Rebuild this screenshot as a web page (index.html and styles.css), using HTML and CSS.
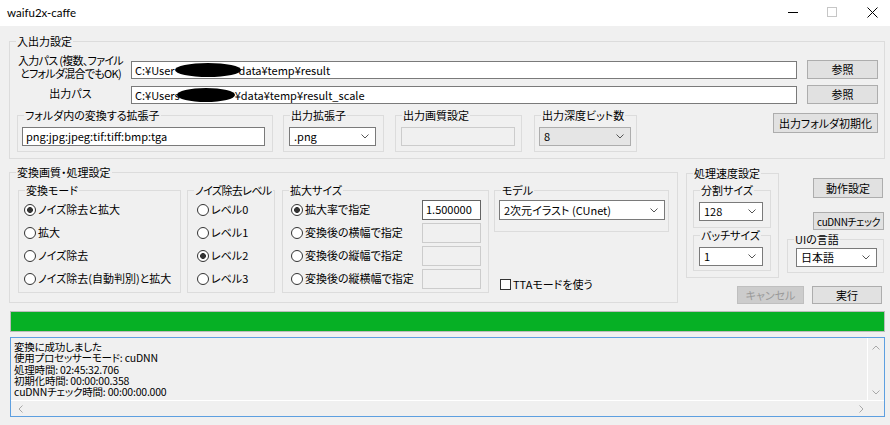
FILE: index.html
```html
<!DOCTYPE html>
<html lang="ja">
<head>
  <meta charset="UTF-8" />
  <title>waifu2x-caffe</title>
  <link rel="stylesheet" href="styles.css">
</head>
<body>
  <div class="titlebar">
    <span class="title">waifu2x-caffe</span>
    <div class="controls">
      <svg class="ctl-min" width="10" height="1"><rect width="10" height="1" fill="#000"/></svg>
      <svg class="ctl-max" width="10" height="10"><rect x="0.5" y="0.5" width="9" height="9" fill="none" stroke="#c6c6c6"/></svg>
      <svg class="ctl-close" width="11" height="11"><path d="M0.5 0.5L10.5 10.5M10.5 0.5L0.5 10.5" stroke="#000" stroke-width="1"/></svg>
    </div>
  </div>

  <div class="client">
    <fieldset class="group io">
      <legend>入出力設定</legend>
      <div class="path-row first">
        <label class="path-label">入力パス&nbsp;(複数、ファイル<br>とフォルダ混合でもOK)</label>
        <div class="textbox path-box">C:¥User<span class="blot blot-a"></span>data¥temp¥result</div>
        <button class="btn ref-btn">参照</button>
      </div>
      <div class="path-row second">
        <label class="path-label">出力パス</label>
        <div class="textbox path-box">C:¥Users<span class="blot blot-b"></span>¥data¥temp¥result_scale</div>
        <button class="btn ref-btn">参照</button>
      </div>

      <div class="io-row">
        <fieldset class="group sub sub-ext">
          <legend>フォルダ内の変換する拡張子</legend>
          <div class="textbox field ext-box">png:jpg:jpeg:tif:tiff:bmp:tga</div>
        </fieldset>
        <fieldset class="group sub sub-outext">
          <legend>出力拡張子</legend>
          <div class="combo field outext-box"><span>.png</span><svg class="chev" width="8" height="5"><path d="M0.5 0.5L4 4L7.5 0.5" fill="none" stroke="#555"/></svg></div>
        </fieldset>
        <fieldset class="group sub sub-quality">
          <legend>出力画質設定</legend>
          <div class="textbox disabled field quality-box"></div>
        </fieldset>
        <fieldset class="group sub sub-depth">
          <legend>出力深度ビット数</legend>
          <div class="combo list field depth-box"><span>8</span><svg class="chev" width="8" height="5"><path d="M0.5 0.5L4 4L7.5 0.5" fill="none" stroke="#555"/></svg></div>
        </fieldset>
        <button class="btn init-btn">出力フォルダ初期化</button>
      </div>
    </fieldset>

    <div class="mid">
      <fieldset class="group conv">
        <legend>変換画質・処理設定</legend>
        <div class="conv-row">
          <fieldset class="group sub2 mode">
            <legend>変換モード</legend>
            <div class="radios">
              <div class="radio-row"><span class="radio on"></span>ノイズ除去と拡大</div>
              <div class="radio-row"><span class="radio"></span>拡大</div>
              <div class="radio-row"><span class="radio"></span>ノイズ除去</div>
              <div class="radio-row"><span class="radio"></span>ノイズ除去(自動判別)と拡大</div>
            </div>
          </fieldset>
          <fieldset class="group sub2 noise">
            <legend>ノイズ除去レベル</legend>
            <div class="radios">
              <div class="radio-row"><span class="radio"></span>レベル0</div>
              <div class="radio-row"><span class="radio"></span>レベル1</div>
              <div class="radio-row"><span class="radio on"></span>レベル2</div>
              <div class="radio-row"><span class="radio"></span>レベル3</div>
            </div>
          </fieldset>
          <fieldset class="group sub2 scale">
            <legend>拡大サイズ</legend>
            <div class="radios">
              <div class="radio-row"><span class="radio on"></span>拡大率で指定<div class="textbox scale-box active">1.500000</div></div>
              <div class="radio-row"><span class="radio"></span>変換後の横幅で指定<div class="textbox disabled scale-box"></div></div>
              <div class="radio-row"><span class="radio"></span>変換後の縦幅で指定<div class="textbox disabled scale-box"></div></div>
              <div class="radio-row"><span class="radio"></span>変換後の縦横幅で指定<div class="textbox disabled scale-box"></div></div>
            </div>
          </fieldset>
          <div class="model-col">
            <fieldset class="group model">
              <legend>モデル</legend>
              <div class="combo model-box"><span>2次元イラスト (CUnet)</span><svg class="chev" width="8" height="5"><path d="M0.5 0.5L4 4L7.5 0.5" fill="none" stroke="#555"/></svg></div>
            </fieldset>
            <div class="check-row"><span class="checkbox"></span>TTAモードを使う</div>
          </div>
        </div>
      </fieldset>

      <div class="side">
        <div class="side-top">
          <fieldset class="group speed">
            <legend>処理速度設定</legend>
            <fieldset class="group speed-sub split">
              <legend>分割サイズ</legend>
              <div class="combo speed-box"><span>128</span><svg class="chev" width="8" height="5"><path d="M0.5 0.5L4 4L7.5 0.5" fill="none" stroke="#555"/></svg></div>
            </fieldset>
            <fieldset class="group speed-sub batch">
              <legend>バッチサイズ</legend>
              <div class="combo speed-box"><span>1</span><svg class="chev" width="8" height="5"><path d="M0.5 0.5L4 4L7.5 0.5" fill="none" stroke="#555"/></svg></div>
            </fieldset>
          </fieldset>
          <div class="right-col">
            <button class="btn run-settings">動作設定</button>
            <button class="btn cudnn">cuDNNチェック</button>
            <fieldset class="group lang">
              <legend>UIの言語</legend>
              <div class="combo lang-box"><span>日本語</span><svg class="chev" width="8" height="5"><path d="M0.5 0.5L4 4L7.5 0.5" fill="none" stroke="#555"/></svg></div>
            </fieldset>
          </div>
        </div>
        <div class="actions">
          <button class="btn cancel" disabled>キャンセル</button>
          <button class="btn exec">実行</button>
        </div>
      </div>
    </div>

    <div class="progress"><div class="progress-fill" style="width: 100%"></div></div>

    <div class="log">
      <div class="log-text">
        <div class="log-line">変換に成功しました</div>
        <div class="log-line">使用プロセッサーモード: cuDNN</div>
        <div class="log-line">処理時間: 02:45:32.706</div>
        <div class="log-line">初期化時間: 00:00:00.358</div>
        <div class="log-line">cuDNNチェック時間: 00:00:00.000</div>
      </div>
      <div class="vscroll">
        <svg width="8" height="5"><path d="M0.5 4.5L4 1L7.5 4.5" fill="none" stroke="#a8a8a8"/></svg>
        <svg width="8" height="5"><path d="M0.5 0.5L4 4L7.5 0.5" fill="none" stroke="#a8a8a8"/></svg>
      </div>
      <div class="hscroll">
        <svg width="5" height="8"><path d="M4.5 0.5L1 4L4.5 7.5" fill="none" stroke="#a8a8a8"/></svg>
        <svg width="5" height="8"><path d="M0.5 0.5L4 4L0.5 7.5" fill="none" stroke="#a8a8a8"/></svg>
      </div>
      <div class="corner"></div>
    </div>
  </div>
</body>
</html>
```

FILE: styles.css
```css
* {
  box-sizing: border-box;
}
body {
  margin: 0;
  width: 890px;
  height: 425px;
  overflow: hidden;
  background: #f0f0f0;
  font-family: "Noto Sans CJK JP", "Noto Sans", sans-serif;
  font-size: 11px;
  line-height: 13px;
  color: #000;
  font-feature-settings: "palt";
}

/* title bar */
.titlebar {
  height: 26px;
  background: #fff;
  display: flex;
  align-items: flex-start;
}
.title {
  font-family: Lato, "Noto Sans", sans-serif;
  font-size: 11.5px;
  line-height: 16px;
  padding: 5px 0 0 7px;
}
.controls {
  margin-left: auto;
  display: flex;
  align-items: flex-start;
  padding: 7px 12px 0 0;
}
.ctl-min {
  margin-top: 5px;
}
.ctl-max {
  margin-left: 29px;
}
.ctl-close {
  margin-left: 30px;
}

.client {
  padding: 0 5px 0 9px;
}

/* group boxes */
.group {
  margin: 0;
  padding: 0;
  min-width: 0;
  border: 1px solid #dcdcdc;
}
.group legend {
  margin-left: 6px;
  padding: 0 1px;
  height: 14px;
  line-height: 14px;
  white-space: nowrap;
}

/* controls */
.btn {
  font: inherit;
  font-feature-settings: "palt";
  padding: 0;
  background: #e1e1e1;
  border: 1px solid #adadad;
  color: #000;
  line-height: 13px;
  white-space: nowrap;
}
.btn:disabled {
  background: #cccccc;
  border-color: #bfbfbf;
  color: #9a9a9a;
}
.textbox {
  background: #fff;
  border: 1px solid #7a7a7a;
  padding: 0 3px;
  white-space: nowrap;
  overflow: hidden;
  display: flex;
  align-items: center;
}
.textbox.disabled {
  background: #f0f0f0;
  border-color: #cccccc;
}
.combo {
  background: #fff;
  border: 1px solid #7a7a7a;
  padding: 0 6px 0 4px;
  display: flex;
  align-items: center;
  white-space: nowrap;
}
.combo.list {
  background: #e5e5e5;
  border-color: #adadad;
}
.chev {
  margin-left: auto;
  flex: none;
}
.blot {
  display: inline-block;
  height: 14px;
  background: #000;
  border-radius: 50%;
}
.blot-a {
  width: 66px;
  margin-right: -2px;
}
.blot-b {
  width: 58px;
  margin-left: -3px;
}

/* input / output group */
.io {
  margin-top: 8px;
  height: 125px;
}
.path-row {
  display: flex;
  align-items: flex-start;
}
.path-row.first {
  margin-top: 6px;
  height: 27px;
}
.path-row.second {
  height: 23px;
}
.path-label {
  width: 121px;
  text-align: center;
  white-space: nowrap;
}
.first .path-label {
  letter-spacing: -0.7px;
}
.second .path-label {
  margin-top: 6px;
}
.path-box {
  width: 666px;
  height: 18px;
}
.first .path-box {
  margin-top: 7px;
}
.second .path-box {
  margin-top: 5px;
}
.ref-btn {
  width: 71px;
  height: 19px;
  margin-left: 10px;
}
.first .ref-btn {
  margin-top: 6px;
}
.second .ref-btn {
  margin-top: 4px;
}

.io-row {
  display: flex;
  align-items: flex-start;
  margin-top: 4px;
}
.sub {
  height: 44px;
}
.sub .field {
  margin-top: 5px;
  height: 19px;
}
.sub-ext {
  margin-left: 7px;
  width: 256px;
}
.ext-box {
  margin-left: 4px;
  width: 243px;
}
.sub-outext {
  margin-left: 10px;
  width: 101px;
}
.outext-box {
  margin-left: 5px;
  width: 87px;
}
.sub-quality {
  margin-left: 11px;
  width: 127px;
}
.quality-box {
  margin-left: 5px;
  width: 114px;
}
.sub-depth {
  margin-left: 12px;
  width: 103px;
}
.depth-box {
  margin-left: 4px;
  width: 92px;
}
.init-btn {
  margin: 5px 6px 0 auto;
  width: 105px;
  height: 20px;
}

/* conversion settings */
.mid {
  display: flex;
  align-items: flex-start;
}
.conv {
  margin-top: 6px;
  width: 669px;
  height: 138px;
}
.conv-row {
  display: flex;
  align-items: flex-start;
  margin-top: 4px;
}
.sub2 {
  height: 110px;
}
.mode {
  margin-left: 8px;
  width: 163px;
}
.noise {
  margin-left: 6px;
  width: 88px;
}
.noise legend {
  letter-spacing: -0.6px;
}
.scale {
  margin-left: 7px;
  width: 207px;
}
.radios {
  margin-top: 1px;
}
.radio-row {
  display: flex;
  align-items: center;
  height: 23px;
  white-space: nowrap;
}
.mode .radio-row {
  padding-left: 5px;
}
.noise .radio-row {
  padding-left: 9px;
}
.scale .radio-row {
  padding-left: 8px;
}
.radio {
  flex: none;
  width: 12px;
  height: 12px;
  margin-right: 2px;
  border: 1px solid #333;
  border-radius: 50%;
  background: #fff;
}
.radio.on {
  background: radial-gradient(circle, #333 0 2.6px, #fff 3.2px);
}
.scale-box {
  margin: 0 7px 0 auto;
  width: 59px;
  height: 20px;
}
.scale-box.active {
  border-color: #646464;
}

.model-col {
  margin-left: 5px;
  width: 175px;
  height: 110px;
  display: flex;
  flex-direction: column;
}
.model {
  height: 49px;
}
.model-box {
  margin: 3px 0 0 4px;
  width: 166px;
  height: 20px;
}
.check-row {
  margin-top: auto;
  margin-bottom: 2px;
  padding-left: 6px;
  display: flex;
  align-items: center;
}
.checkbox {
  width: 11px;
  height: 11px;
  border: 1px solid #333;
  background: #fff;
  margin-right: 2px;
}

/* side panel */
.side {
  margin-left: 7px;
  width: 199px;
  display: flex;
  flex-direction: column;
}
.side-top {
  display: flex;
  align-items: flex-start;
}
.speed {
  margin: 7px 0 0 1px;
  width: 93px;
  height: 112px;
}
.speed-sub {
  margin-left: 6px;
  width: 78px;
}
.split {
  margin-top: 3px;
  height: 45px;
}
.batch {
  height: 43px;
}
.speed-box {
  margin: 5px 0 0 5px;
  width: 64px;
  height: 19px;
}
.right-col {
  margin-left: 8px;
  width: 97px;
  display: flex;
  flex-direction: column;
  align-items: flex-end;
}
.run-settings {
  margin: 19px 1px 0 0;
  width: 70px;
  height: 20px;
}
.cudnn {
  margin-top: 14px;
  width: 71px;
  height: 18px;
  font-size: 10px;
  letter-spacing: -0.4px;
}
.lang {
  margin-top: 2px;
  width: 97px;
  height: 41px;
}
.lang-box {
  margin: 2px 0 0 8px;
  width: 81px;
  height: 19px;
}
.actions {
  margin-top: 8px;
  padding-right: 2px;
  display: flex;
  justify-content: flex-end;
}
.cancel {
  width: 67px;
  height: 18px;
}
.exec {
  margin-left: 8px;
  width: 70px;
  height: 18px;
}

/* progress + log */
.progress {
  margin: 7px 0 0 1px;
  width: 875px;
  height: 21px;
  border: 1px solid #bcbcbc;
  background: #e6e6e6;
}
.progress-fill {
  height: 100%;
  background: #06b025;
}
.log {
  margin: 5px 0 0 1px;
  width: 875px;
  height: 80px;
  border: 1px solid #5d9fe0;
  background: #f0f0f0;
  display: grid;
  grid-template-columns: 1fr 16px;
  grid-template-rows: 1fr 15px;
}
.log-text {
  padding: 3px 0 0 3px;
  border-right: 1px solid #fff;
  border-bottom: 1px solid #fff;
  white-space: nowrap;
  overflow: hidden;
}
.log-line {
  height: 11.3px;
  line-height: 11.3px;
  font-size: 10.5px;
  letter-spacing: -0.2px;
}
.vscroll {
  display: flex;
  flex-direction: column;
  justify-content: space-between;
  align-items: center;
  padding: 7px 0 5px;
  border-bottom: 1px solid #fff;
}
.hscroll {
  display: flex;
  justify-content: space-between;
  align-items: center;
  padding: 0 4px 0 7px;
}
```
